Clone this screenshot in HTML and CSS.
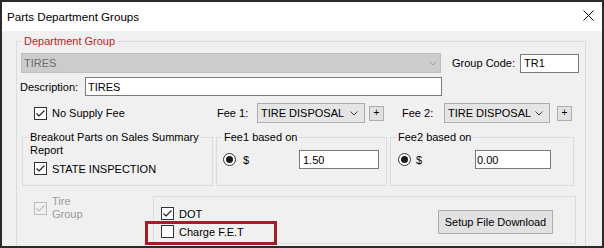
FILE: index.html
```html
<!DOCTYPE html>
<html lang="en">
<head>
    <meta charset="UTF-8">
    <title>Parts Department Groups</title>
    <link rel="stylesheet" href="styles.css">
</head>
<body>

    <div class="window">
        <div class="titlebar">
            <span class="title">Parts Department Groups</span>
            <svg class="close" width="11" height="11" viewBox="0 0 11 11"><path d="M0.5 0.5 L10.5 10.5 M10.5 0.5 L0.5 10.5"/></svg>
        </div>

        <div class="client">
            <fieldset class="group main">
                <legend class="legend-red">Department Group</legend>

                <div class="row row-dept">
                    <div class="combo disabled dept-combo">
                        <span>TIRES</span>
                        <svg class="chevron" width="8" height="5" viewBox="0 0 8 5"><path d="M0.5 0.5 L4 4 L7.5 0.5"/></svg>
                    </div>
                    <span class="label code-label">Group Code:</span>
                    <input class="textbox code-box" type="text" value="TR1">
                </div>

                <div class="row row-desc">
                    <span class="label desc-label">Description:</span>
                    <input class="textbox desc-box" type="text" value="TIRES">
                </div>

                <div class="row row-fees">
                    <div class="check-item supply">
                        <span class="check"><svg width="11" height="11" viewBox="0 0 11 11"><path d="M1.5 5.5 L4 8 L9.5 2.5"/></svg></span>
                        <span>No Supply Fee</span>
                    </div>
                    <span class="label fee1-label">Fee 1:</span>
                    <div class="combo fee1-combo">
                        <span>TIRE DISPOSAL</span>
                        <svg class="chevron" width="8" height="5" viewBox="0 0 8 5"><path d="M0.5 0.5 L4 4 L7.5 0.5"/></svg>
                    </div>
                    <button class="plus plus1">+</button>
                    <span class="label fee2-label">Fee 2:</span>
                    <div class="combo fee2-combo">
                        <span>TIRE DISPOSAL</span>
                        <svg class="chevron" width="8" height="5" viewBox="0 0 8 5"><path d="M0.5 0.5 L4 4 L7.5 0.5"/></svg>
                    </div>
                    <button class="plus plus2">+</button>
                </div>

                <div class="row row-boxes">
                    <fieldset class="group breakout">
                        <legend>Breakout Parts on Sales Summary</legend>
                        <div class="legend-more">Report</div>
                        <div class="check-item state">
                            <span class="check"><svg width="11" height="11" viewBox="0 0 11 11"><path d="M1.5 5.5 L4 8 L9.5 2.5"/></svg></span>
                            <span>STATE INSPECTION</span>
                        </div>
                    </fieldset>

                    <fieldset class="group fee1">
                        <legend>Fee1 based on</legend>
                        <div class="radio-row">
                            <span class="radio"></span>
                            <span class="dollar">$</span>
                            <input class="textbox amount" type="text" value="1.50">
                        </div>
                    </fieldset>

                    <fieldset class="group fee2">
                        <legend>Fee2 based on</legend>
                        <div class="radio-row">
                            <span class="radio"></span>
                            <span class="dollar">$</span>
                            <input class="textbox amount" type="text" value="0.00">
                        </div>
                    </fieldset>
                </div>

                <div class="row row-tire">
                    <div class="check-item tire">
                        <span class="check disabled"><svg width="11" height="11" viewBox="0 0 11 11"><path d="M1.5 5.5 L4 8 L9.5 2.5"/></svg></span>
                        <span class="tire-label">Tire<br>Group</span>
                    </div>

                    <div class="panel">
                        <div class="panel-checks">
                            <div class="check-item">
                                <span class="check"><svg width="11" height="11" viewBox="0 0 11 11"><path d="M1.5 5.5 L4 8 L9.5 2.5"/></svg></span>
                                <span>DOT</span>
                            </div>
                            <div class="check-item">
                                <span class="check"></span>
                                <span>Charge F.E.T</span>
                            </div>
                        </div>
                        <button class="setup">Setup File Download</button>
                    </div>
                </div>
            </fieldset>
        </div>

        <div class="highlight"></div>
    </div>

</body>
</html>
```

FILE: styles.css
```css
* {
    box-sizing: border-box;
}

body {
    margin: 0;
    font-family: "Liberation Sans", Arial, sans-serif;
    font-size: 11px;
    color: #000;
    background-color: #fff;
}

.window {
    position: relative;
    width: 604px;
    height: 248px;
    border: 2px solid #2b2b2b;
    background-color: #f0f0f0;
    overflow: hidden;
}

.titlebar {
    display: flex;
    align-items: center;
    justify-content: space-between;
    height: 29px;
    padding: 0 8px 0 5px;
    background-color: #fff;
}

.title {
    font-size: 11.6px;
    line-height: 14px;
}

.close {
    margin-bottom: 3px;
    stroke: #111;
    stroke-width: 1;
    fill: none;
}

.client {
    padding: 4px 0 0 14px;
}

.group {
    margin: 0;
    padding: 0;
    min-width: 0;
    border: 1px solid #dcdcdc;
}

.group legend {
    margin-left: 5px;
    padding: 0 2px;
    line-height: 13px;
    white-space: nowrap;
}

.main {
    width: 570px;
    height: 240px;
}

.legend-red {
    color: #c41a22;
}

.row {
    display: flex;
    align-items: center;
}

/* inputs */
.textbox {
    height: 19px;
    margin: 0;
    padding: 0 3px;
    border: 1px solid #7a7a7a;
    background-color: #fff;
    font-family: inherit;
    font-size: 11px;
    color: #000;
    outline: none;
}

.combo {
    display: flex;
    align-items: center;
    justify-content: space-between;
    height: 20px;
    padding: 0 6px 0 3px;
    border: 1px solid #acacac;
    background-color: #e5e5e5;
}

.combo .chevron {
    fill: none;
    stroke: #444;
    stroke-width: 1;
}

.combo.disabled {
    border-color: #bfbfbf;
    background-color: #cccccc;
    color: #6d6d6d;
    padding: 0 3px 0 2px;
}

.combo.disabled .chevron {
    stroke: #a2a2a2;
}

.plus {
    width: 15px;
    height: 15px;
    padding: 0;
    border: 1px solid #adadad;
    background-color: #e1e1e1;
    font-family: inherit;
    font-size: 10px;
    line-height: 12px;
    color: #000;
}

.check-item {
    display: flex;
    align-items: center;
    gap: 5px;
}

.check {
    display: flex;
    align-items: center;
    justify-content: center;
    width: 13px;
    height: 13px;
    border: 1px solid #333;
    background-color: #fff;
}

.check svg {
    fill: none;
    stroke: #222;
    stroke-width: 1.2;
}

.check.disabled {
    border-color: #bcbcbc;
    background-color: #f0f0f0;
}

.check.disabled svg {
    stroke: #bcbcbc;
}

.radio {
    display: flex;
    align-items: center;
    justify-content: center;
    width: 13px;
    height: 13px;
    border: 1px solid #333;
    border-radius: 50%;
    background-color: #fff;
}

.radio::after {
    content: "";
    width: 7px;
    height: 7px;
    border-radius: 50%;
    background-color: #1a1a1a;
}

/* row 1 */
.row-dept {
    height: 20px;
    margin-top: 5px;
    padding-left: 4px;
}

.dept-combo {
    width: 420px;
}

.code-label {
    width: 68px;
    margin-left: 11px;
}

.code-box {
    width: 59px;
}

/* row 2 */
.row-desc {
    height: 19px;
    margin-top: 4px;
    padding-left: 3px;
}

.desc-label {
    width: 65px;
}

.desc-box {
    width: 357px;
    padding-left: 2px;
}

/* row 3 */
.row-fees {
    height: 20px;
    margin-top: 7px;
    padding-left: 17px;
}

.supply {
    width: 183px;
}

.fee1-label {
    width: 40px;
}

.fee1-combo {
    width: 108px;
}

.plus1 {
    margin-left: 4px;
}

.fee2-label {
    width: 42px;
    margin-left: 18px;
}

.fee2-combo {
    width: 106px;
}

.plus2 {
    margin-left: 7px;
}

/* row 4 */
.row-boxes {
    align-items: flex-start;
    margin-top: 8px;
}

.breakout {
    width: 191px;
    height: 55px;
    margin-left: 5px;
}

.legend-more {
    padding-left: 7px;
    line-height: 13px;
}

.state {
    margin-top: 5px;
    padding-left: 11px;
}

.fee1 {
    width: 171px;
    height: 55px;
    margin-left: 3px;
}

.fee2 {
    width: 184px;
    height: 55px;
    margin-left: 3px;
}

.radio-row {
    display: flex;
    align-items: center;
    height: 19px;
    margin-top: 6px;
    padding-left: 6px;
}

.radio-row .dollar {
    width: 56px;
    margin-left: 7px;
}

.fee1 .amount {
    width: 80px;
}

.fee2 .radio-row {
    padding-left: 7px;
}

.fee2 .dollar {
    width: 59px;
    margin-left: 5px;
}

.fee2 .amount {
    width: 76px;
    padding-left: 1px;
}

/* row 5 */
.row-tire {
    align-items: flex-start;
    margin-top: 10px;
}

.tire {
    width: 136px;
    margin-top: -1px;
    padding-left: 17px;
}

.tire-label {
    line-height: 13px;
    color: #9a9a9a;
}

.panel {
    display: flex;
    justify-content: space-between;
    width: 423px;
    height: 48px;
    border: 1px solid #dcdcdc;
}

.panel-checks {
    display: flex;
    flex-direction: column;
    gap: 5px;
    padding: 10px 0 0 7px;
}

.setup {
    width: 115px;
    height: 24px;
    margin: 13px 22px 0 0;
    padding: 0;
    border: 1px solid #adadad;
    background-color: #e1e1e1;
    font-family: inherit;
    font-size: 11px;
    color: #000;
}

/* annotation box */
.highlight {
    position: absolute;
    left: 143px;
    top: 219px;
    width: 132px;
    height: 24px;
    border: 3px solid #a21f27;
}
```
